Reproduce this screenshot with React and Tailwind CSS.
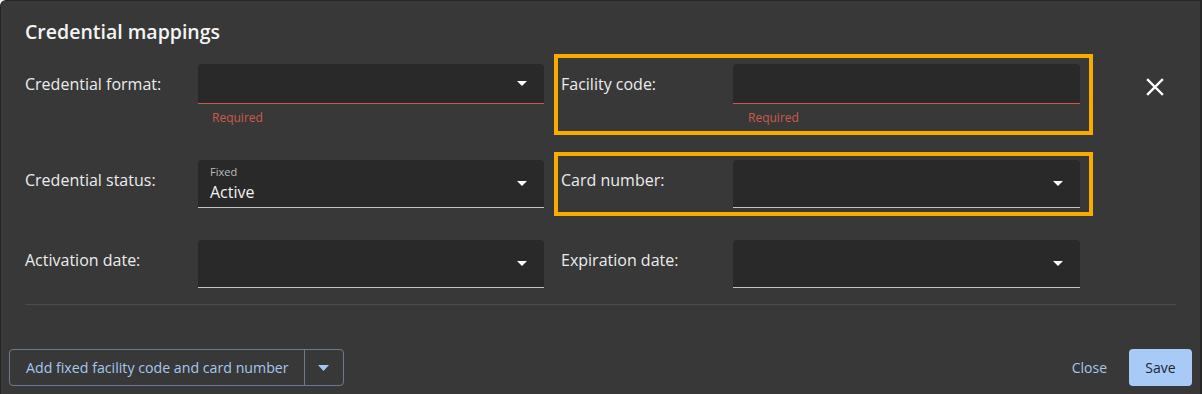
import React from 'react';

// --- Ícones ---
const Caret = () => (
    <svg width="10" height="5" viewBox="0 0 10 5" className="shrink-0">
        <path d="M0 0h10L5 5z" fill="#ffffff" />
    </svg>
);

const CloseX = () => (
    <svg width="18" height="18" viewBox="0 0 18 18" fill="none" stroke="#ffffff" strokeWidth={2.4} strokeLinecap="square">
        <path d="M2 2L16 16M16 2L2 16" />
    </svg>
);

const Required = ({ pad }) => (
    <span className={`mt-[6px] ${pad} text-[12px] leading-[16px] text-[#d0584a]`}>Required</span>
);

// --- Campo de seleção ---
const SelectField = ({ hint, value }) => (
    <div className="h-[48px] bg-[#292929] rounded-t-[4px] border-b border-[#c4c4c4] flex items-center pl-[12px] pr-[17px]">
        <div className="flex-1 self-stretch flex flex-col pt-[5px]">
            {hint && <span className="text-[11px] leading-[13px] text-[#bcbcbc]">{hint}</span>}
            {value && <span className="mt-[4px] text-[16px] leading-[21px] text-[#f2f2f2]">{value}</span>}
        </div>
        <Caret />
    </div>
);

const FormatField = () => (
    <div className="flex flex-col">
        <div className="h-[40px] bg-[#292929] rounded-t-[4px] border-b border-[#d0584a] flex items-center justify-end pr-[17px]">
            <Caret />
        </div>
        <Required pad="pl-[14px]" />
    </div>
);

const FacilityField = () => (
    <div className="flex flex-col">
        <div className="h-[40px] bg-[#292929] rounded-t-[4px] border-b border-[#d0584a]" />
        <Required pad="pl-[15px]" />
    </div>
);

const Label = ({ children, width }) => (
    <div className={`${width} shrink-0 pt-[10px] text-[16px] leading-[20px] text-[#ececec]`}>{children}</div>
);

export default function App() {
    return (
        <div className="w-[1202px] h-[394px] bg-[#383838] border-l border-t border-r-2 border-[#262626] rounded-tl-[6px] font-['Open_Sans',sans-serif] flex flex-col">
            {/* Título */}
            <h2 className="pl-[24px] pt-[17px] text-[19.5px] leading-[28px] font-semibold text-[#f4f4f4]">Credential mappings</h2>

            {/* Linha 1 */}
            <div className="flex items-start pl-[24px] mt-[12px]">
                <div className="flex pt-[6px]">
                    <Label width="w-[173px]">Credential format:</Label>
                    <div className="w-[346px]"><FormatField /></div>
                </div>
                <div className="ml-[14px] h-[73px] flex pl-[3px] pr-[9px] pt-[6px] outline-4 outline-[#f9ab00]">
                    <Label width="w-[172px]">Facility code:</Label>
                    <div className="w-[347px]"><FacilityField /></div>
                </div>
                <button className="ml-[57px] mt-[20px]"><CloseX /></button>
            </div>

            {/* Linha 2 */}
            <div className="flex items-start pl-[24px] mt-[25px]">
                <div className="flex pt-[4px]">
                    <Label width="w-[173px]">Credential status:</Label>
                    <div className="w-[346px]"><SelectField hint="Fixed" value="Active" /></div>
                </div>
                <div className="ml-[14px] h-[56px] flex pl-[3px] pr-[9px] pt-[4px] outline-4 outline-[#f9ab00]">
                    <Label width="w-[172px]">Card number:</Label>
                    <div className="w-[347px]"><SelectField /></div>
                </div>
            </div>

            {/* Linha 3 */}
            <div className="flex items-start pl-[24px] mt-[24px]">
                <div className="flex pt-[4px]">
                    <Label width="w-[173px]">Activation date:</Label>
                    <div className="w-[346px]"><SelectField /></div>
                </div>
                <div className="ml-[14px] h-[56px] flex pl-[3px] pr-[9px] pt-[4px]">
                    <Label width="w-[172px]">Expiration date:</Label>
                    <div className="w-[347px]"><SelectField /></div>
                </div>
            </div>

            {/* Divisor */}
            <div className="mx-[24px] mt-[12px] border-t border-[#4c4c4c]" />

            {/* Rodapé */}
            <div className="mt-auto mb-[8px] flex items-center justify-between pl-[8px] pr-[8px]">
                <div className="flex h-[37px] border border-[#6c7a8c] rounded-[4px]">
                    <button className="pl-[16px] pr-[15px] text-[14.2px] text-[#a4c7f2] border-r border-[#6c7a8c]">
                        Add fixed facility code and card number
                    </button>
                    <button className="w-[38px] flex items-center justify-center">
                        <svg width="11" height="6" viewBox="0 0 11 6"><path d="M0 0h11L5.5 6z" fill="#a4c7f2" /></svg>
                    </button>
                </div>
                <div className="flex items-center gap-[22px]">
                    <button className="text-[14px] text-[#a4c7f2]">Close</button>
                    <button className="h-[37px] w-[63px] rounded-[4px] bg-[#a8caf6] text-[14px] text-[#1d2633]">Save</button>
                </div>
            </div>
        </div>
    );
}
